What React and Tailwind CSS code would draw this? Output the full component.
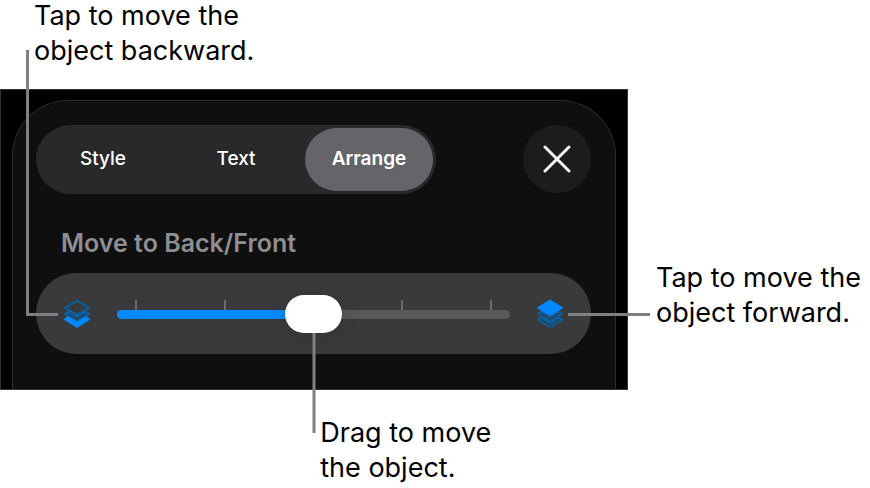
import { useState } from 'react';

const TABS = ['Style', 'Text', 'Arrange'];
const TICKS = [0, 1, 2, 3, 4];

const TOP_LAYER = 'M14 1.5 26 8.8 14 16 2 8.8Z';
const MIDDLE_LAYER = 'M5 12.8 2 14.8 14 22 26 14.8 23 12.8 14 18.2Z';
const BOTTOM_LAYER = 'M5 18.8 2 20.8 14 28 26 20.8 23 18.8 14 24.2Z';

function SendBackwardIcon() {
  return (
    <svg className="h-[30px] w-7" viewBox="0 0 28 30" fill="none" strokeLinejoin="round" aria-hidden="true">
      <path d={TOP_LAYER} stroke="#0264ac" strokeWidth="1.9" />
      <path d={MIDDLE_LAYER} stroke="#0264ac" strokeWidth="1.9" />
      <path d="M4.6 18 1.8 20.4 14 28 26.2 20.4 23.4 18 14 23.8Z" fill="#0088ff" stroke="#0088ff" strokeWidth="1.6" />
    </svg>
  );
}

function BringForwardIcon() {
  return (
    <svg className="h-[30px] w-7" viewBox="0 0 28 30" fill="none" strokeLinejoin="round" aria-hidden="true">
      <path d={BOTTOM_LAYER} stroke="#0264ac" strokeWidth="1.8" />
      <path d={MIDDLE_LAYER} stroke="#0264ac" strokeWidth="1.8" />
      <path d={TOP_LAYER} fill="#0088ff" stroke="#0088ff" strokeWidth="1.9" />
    </svg>
  );
}

function TabBar({ active, onChange }) {
  return (
    <div role="tablist" className="grid w-[400px] grid-cols-3 gap-[5px] rounded-full bg-[#29292b] p-[3px]">
      {TABS.map((tab) => (
        <button
          key={tab}
          type="button"
          role="tab"
          aria-selected={tab === active}
          onClick={() => onChange(tab)}
          className={
            tab === active
              ? 'h-[63px] rounded-full bg-[#656469] text-[19px] font-semibold text-white'
              : 'h-[63px] rounded-full text-[19px] font-medium text-white'
          }
        >
          {tab}
        </button>
      ))}
    </div>
  );
}

function DepthSlider() {
  const [depth, setDepth] = useState(50);

  return (
    <div className="relative flex h-[81px] items-center justify-between rounded-full bg-[#3a3a3c] px-[27px]">
      <button type="button" aria-label="Move backward">
        <SendBackwardIcon />
      </button>
      <div className="relative mx-[26px] h-[38px] flex-1">
        {/* Tick marks sit just above the track */}
        <div className="absolute inset-x-[18px] top-[5px] flex justify-between">
          {TICKS.map((tick) => (
            <span key={tick} className="h-[11px] w-[2px] bg-[#6a6a6c]" />
          ))}
        </div>
        <div className="absolute inset-x-0 top-[15px] h-[9px] overflow-hidden rounded-full bg-[#58585a]">
          <div className="h-full bg-[#0088ff]" style={{ width: `${depth}%` }} />
        </div>
        <input
          id="depth"
          type="range"
          min="0"
          max="100"
          value={depth}
          onChange={(e) => setDepth(Number(e.target.value))}
          className="relative block h-[38px] w-full appearance-none bg-transparent [&::-webkit-slider-thumb]:h-[38px] [&::-webkit-slider-thumb]:w-[57px] [&::-webkit-slider-thumb]:appearance-none [&::-webkit-slider-thumb]:rounded-full [&::-webkit-slider-thumb]:bg-white [&::-webkit-slider-thumb]:shadow-[0_2px_16px_rgba(0,0,0,0.15)]"
        />
        {/* Leader down to the drag callout */}
        <span className="absolute left-1/2 top-[38px] h-[100px] w-[3px] -translate-x-1/2 bg-[#808080]" />
      </div>
      <button type="button" aria-label="Move forward">
        <BringForwardIcon />
      </button>
    </div>
  );
}

function ArrangePanel() {
  const [tab, setTab] = useState('Arrange');

  return (
    <section className="border border-[#333333] bg-black px-[11px] pt-[10px]">
      <div className="rounded-t-[56px] border border-b-0 border-[#2b2b2b] bg-[#0f0f0f] pb-[35px] pl-[23px] pr-6 pt-6">
        <div className="flex items-start justify-between">
          <TabBar active={tab} onChange={setTab} />
          <button
            type="button"
            aria-label="Close"
            className="flex size-[68px] items-center justify-center rounded-full bg-[#1c1c1c]"
          >
            <svg className="size-7" viewBox="0 0 28 28" fill="none" stroke="#f5f5f5" strokeWidth="3" strokeLinecap="round" aria-hidden="true">
              <path d="M2 2 26 26M26 2 2 26" />
            </svg>
          </button>
        </div>
        <label htmlFor="depth" className="mb-[14px] mt-[33px] block pl-[25px] text-[25px] leading-8 font-semibold text-[#8e8e93]">
          Move to Back/Front
        </label>
        <DepthSlider />
      </div>
    </section>
  );
}

function App() {
  return (
    <main className="flex bg-white font-['Inter',sans-serif] text-black">
      <div className="min-w-0 flex-1">
        <p className="-mt-[2px] pb-[21px] pl-[34px] text-[27px] leading-[35px]">
          Tap to move the
          <br />
          object backward.
        </p>
        <div className="relative">
          <ArrangePanel />
          {/* Leaders to the backward and forward buttons */}
          <span className="absolute -top-[39px] left-[26px] h-[266px] w-8 border-b-[3px] border-l-[3px] border-[#808080]" />
          <span className="absolute -right-[22px] top-[224px] h-[3px] w-[82px] bg-[#808080]" />
        </div>
        <p className="pl-[51%] pt-[25px] text-[27px] leading-[35px]">
          Drag to move
          <br />
          the object.
        </p>
      </div>
      <p className="w-[242px] shrink-0 whitespace-nowrap pl-7 pt-[260px] text-[27px] leading-[35px]">
        Tap to move the
        <br />
        object forward.
      </p>
    </main>
  );
}

export default App;
